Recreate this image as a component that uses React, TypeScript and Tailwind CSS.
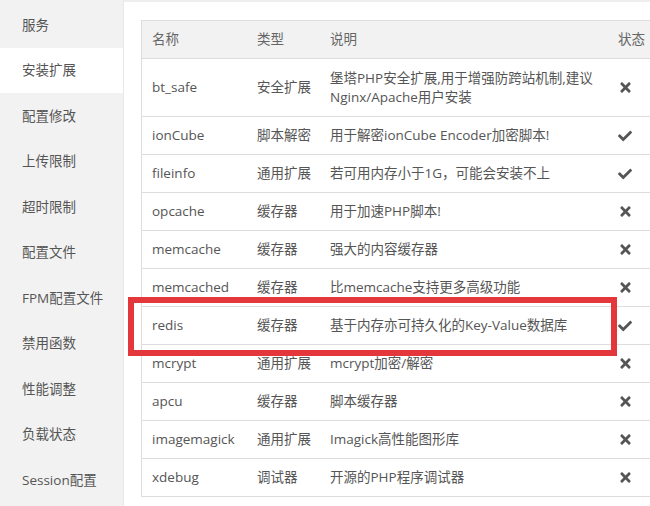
import React from "react";
import { FaTimes, FaCheck } from "react-icons/fa";

const side = [
  "服务",
  "安装扩展",
  "配置修改",
  "上传限制",
  "超时限制",
  "配置文件",
  "FPM配置文件",
  "禁用函数",
  "性能调整",
  "负载状态",
  "Session配置",
];

type Row = { name: string; type: string; desc: React.ReactNode; ok: boolean; tall?: boolean };

const rows: Row[] = [
  {
    name: "bt_safe",
    type: "安全扩展",
    desc: (
      <>
        堡塔PHP安全扩展,用于增强防跨站机制,建议
        <br />
        Nginx/Apache用户安装
      </>
    ),
    ok: false,
    tall: true,
  },
  { name: "ionCube", type: "脚本解密", desc: "用于解密ionCube Encoder加密脚本!", ok: true },
  { name: "fileinfo", type: "通用扩展", desc: "若可用内存小于1G，可能会安装不上", ok: true },
  { name: "opcache", type: "缓存器", desc: "用于加速PHP脚本!", ok: false },
  { name: "memcache", type: "缓存器", desc: "强大的内容缓存器", ok: false },
  { name: "memcached", type: "缓存器", desc: "比memcache支持更多高级功能", ok: false },
  { name: "redis", type: "缓存器", desc: "基于内存亦可持久化的Key-Value数据库", ok: true },
  { name: "mcrypt", type: "通用扩展", desc: "mcrypt加密/解密", ok: false },
  { name: "apcu", type: "缓存器", desc: "脚本缓存器", ok: false },
  { name: "imagemagick", type: "通用扩展", desc: "Imagick高性能图形库", ok: false },
  { name: "xdebug", type: "调试器", desc: "开源的PHP程序调试器", ok: false },
];

export default function App() {
  return (
    <div
      className="w-[650px] h-[506px] overflow-hidden flex bg-white text-[#555] text-[13.5px]"
      style={{ fontFamily: '"Open Sans", "Noto Sans CJK SC", sans-serif' }}
    >
      <div className="w-[124px] shrink-0 bg-[#f2f2f2] border-r border-[#e8e8e8] pt-[2px]">
        {side.map((s, i) => (
          <div
            key={s}
            className={
              "h-[45.5px] flex items-center pl-[22px] " + (i === 1 ? "bg-white" : "")
            }
          >
            {s}
          </div>
        ))}
      </div>
      <div className="relative flex-1 border-t-[2px] border-[#eeeeee] pt-[18px] pl-[17px]">
        <div className="w-[540px] border-l border-t border-[#dddddd]">
          <div className="h-[38px] flex items-center bg-[#f2f2f2] border-b border-[#dddddd] text-[#666]">
            <div className="w-[105px] pl-[10px]">名称</div>
            <div className="w-[73px] pl-[10px]">类型</div>
            <div className="w-[288px] pl-[10px]">说明</div>
            <div className="pl-[10px]">状态</div>
          </div>
          {rows.map((r) => (
            <div
              key={r.name}
              className={
                "flex items-center border-b border-[#dddddd] " +
                (r.tall ? "h-[58px]" : "h-[38px]")
              }
            >
              <div className="w-[105px] pl-[10px]">{r.name}</div>
              <div className="w-[73px] pl-[10px]">{r.type}</div>
              <div className="w-[288px] pl-[10px] leading-[19px] whitespace-nowrap">{r.desc}</div>
              <div className="pl-[10px] flex items-center text-[#555]">
                {r.ok ? <FaCheck size={14} /> : <FaTimes size={15} />}
              </div>
            </div>
          ))}
        </div>
        <div className="absolute left-[4px] top-[295px] w-[489px] h-[59px] border-[6px] border-[#e3373b]" />
      </div>
    </div>
  );
}
